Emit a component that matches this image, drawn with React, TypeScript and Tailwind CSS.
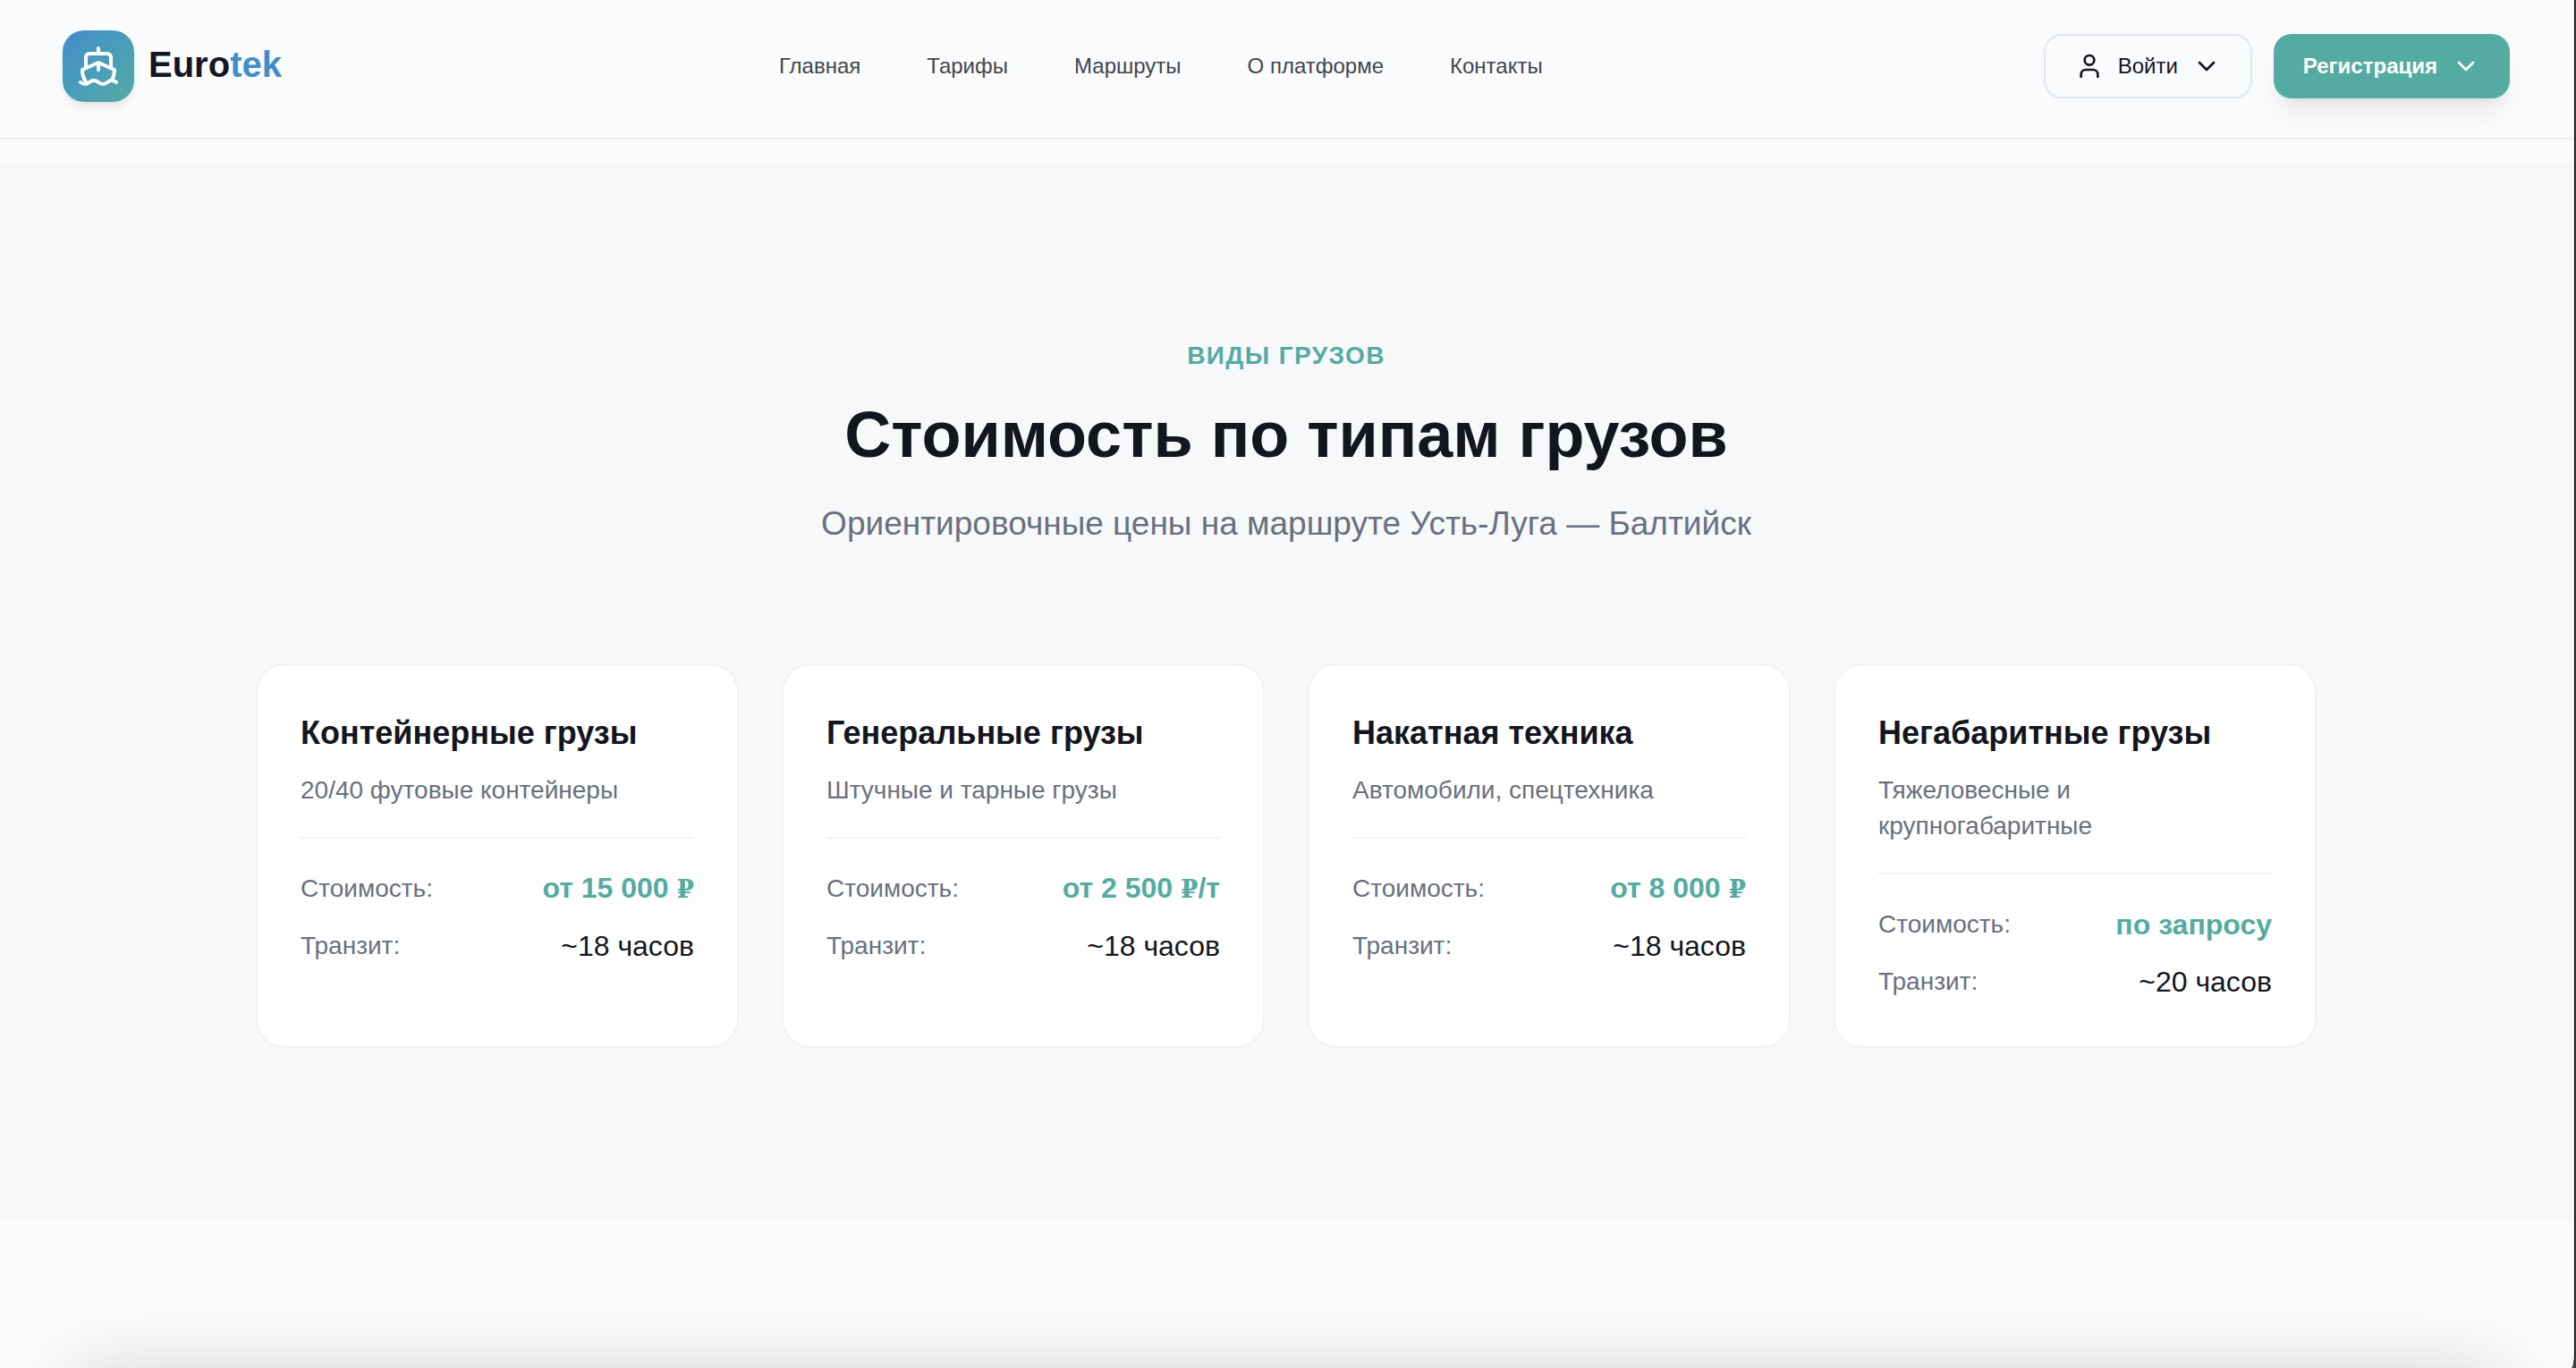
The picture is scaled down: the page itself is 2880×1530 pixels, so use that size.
import { ChevronDown, Ship, User } from "lucide-react"

type Cargo = {
  title: string
  description: string
  price: string
  perTon?: boolean
  transit: string
}

const NAV_LINKS = [
  { label: "Главная",     href: "#home" },
  { label: "Тарифы",      href: "#tariffs" },
  { label: "Маршруты",    href: "#routes" },
  { label: "О платформе", href: "#about" },
  { label: "Контакты",    href: "#contacts" },
]

const CARGO_TYPES: Cargo[] = [
  { title: "Контейнерные грузы", description: "20/40 футовые контейнеры",        price: "от 15 000",  transit: "~18 часов" },
  { title: "Генеральные грузы",  description: "Штучные и тарные грузы",          price: "от 2 500",   transit: "~18 часов", perTon: true },
  { title: "Накатная техника",   description: "Автомобили, спецтехника",         price: "от 8 000",   transit: "~18 часов" },
  { title: "Негабаритные грузы", description: "Тяжеловесные и крупногабаритные", price: "по запросу", transit: "~20 часов" },
]

function Header() {
  return (
    <header className="flex items-start justify-between border-b-2 border-[#eceef0] pt-[34px] pb-10 pl-[70px] pr-[72px]">
      <a href="#home" className="flex items-center gap-4">
        <span className="flex size-20 items-center justify-center rounded-3xl bg-gradient-to-br from-[#428dcb] to-[#54aba2] shadow-[0_8px_12px_-2px_rgba(0,0,0,0.07),0_4px_8px_-4px_rgba(0,0,0,0.07)]">
          <Ship className="size-12 text-white" />
        </span>
        <span className="pb-1 text-[40px] leading-12 font-bold text-[#14161f]">
          Euro<span className="text-[#428dcb]">tek</span>
        </span>
      </a>

      <nav className="flex h-20 items-center gap-[74px] pr-1">
        {NAV_LINKS.map(link => (
          <a key={link.href} href={link.href} className="text-2xl text-[#43454c]">
            {link.label}
          </a>
        ))}
      </nav>

      <div className="flex h-20 items-center gap-6">
        <button type="button" className="flex h-[72px] items-center gap-4 rounded-[20px] border-2 border-[#e1e7ec] px-[33px] text-2xl text-[#14161f]">
          <User className="size-8" />
          Войти
          <ChevronDown className="size-8" />
        </button>
        <button type="button" className="flex h-[72px] items-center gap-4 rounded-[20px] bg-[#54aba2] px-[33px] text-2xl font-bold text-white shadow-[0_20px_30px_-6px_rgba(0,0,0,0.08),0_8px_12px_-8px_rgba(0,0,0,0.08)]">
          Регистрация
          <ChevronDown className="size-8" />
        </button>
      </div>
    </header>
  )
}

function Price({ cargo }: { cargo: Cargo }) {
  if (!/\d/.test(cargo.price)) return <>{cargo.price}</>
  return (
    <>
      {cargo.price} <span className="font-['DejaVu_Serif',serif] text-[28px]">₽</span>
      {cargo.perTon && "/т"}
    </>
  )
}

function CargoCard({ cargo }: { cargo: Cargo }) {
  return (
    <article className="rounded-[32px] border-2 border-[#f0f2f6] bg-white p-12">
      <h3 className="text-4xl leading-14 font-bold text-[#14161f]">{cargo.title}</h3>
      <p className="mt-4 text-[28px] leading-10 text-[#697080]">{cargo.description}</p>
      <dl className="mt-8 space-y-4 border-t-2 border-[#f0f2f6] pt-8">
        <div className="flex h-12 items-center justify-between">
          <dt className="text-[28px] leading-12 text-[#697080]">Стоимость:</dt>
          <dd className="text-[32px] leading-12 font-bold text-[#54aba2]">
            <Price cargo={cargo} />
          </dd>
        </div>
        <div className="flex h-12 items-center justify-between">
          <dt className="text-[28px] leading-12 text-[#697080]">Транзит:</dt>
          <dd className="text-[32px] leading-12 text-[#14161f]">{cargo.transit}</dd>
        </div>
      </dl>
    </article>
  )
}

export default function App() {
  return (
    <div className="h-screen bg-[#4a3c44] pr-px font-['Liberation_Sans',Arial,sans-serif]">
      <div className="relative h-full overflow-hidden rounded-br-[4px_16px] border-r border-black bg-[#f9fbfd]">
        <Header />

        <main className="pt-[26px]">
          <section className="bg-[#f7f8fa] py-48 pr-0.5">
            <div className="mx-auto max-w-[2304px]">
              <div className="mb-32 text-center">
                <p className="text-[28px] leading-12 font-bold tracking-wider text-[#54aba2] uppercase">Виды грузов</p>
                <h2 className="mt-6 text-7xl leading-20 font-bold text-[#14161f]">Стоимость по типам грузов</h2>
                <p className="mt-8 text-[37px] leading-14 text-[#697080]">
                  Ориентировочные цены на маршруте Усть-Луга — Балтийск
                </p>
              </div>

              <div className="grid grid-cols-4 gap-12">
                {CARGO_TYPES.map(cargo => (
                  <CargoCard key={cargo.title} cargo={cargo} />
                ))}
              </div>
            </div>
          </section>
        </main>

        {/* Shadow rising from the bottom edge */}
        <div className="absolute inset-x-20 top-full h-40 shadow-[0_0_80px_rgba(0,0,0,0.15)]" />
      </div>
    </div>
  )
}
